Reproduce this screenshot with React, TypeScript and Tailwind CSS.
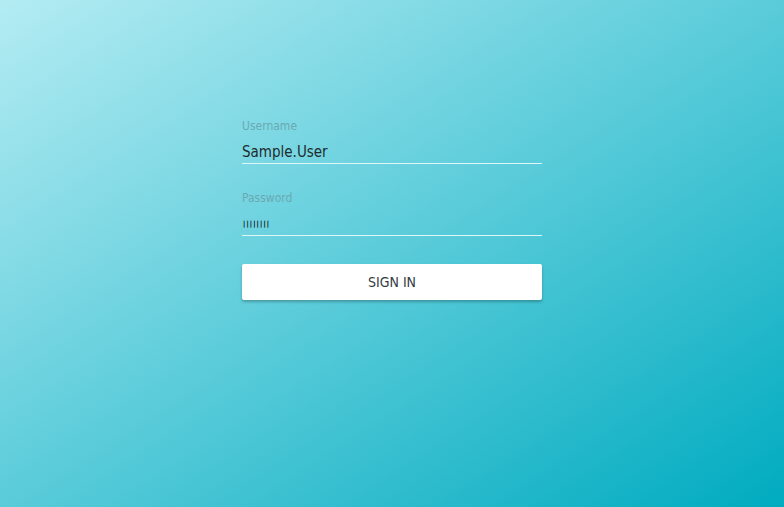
export default function App() {
  return (
    <div
      className="w-[784px] h-[507px] bg-[linear-gradient(to_bottom_right,#b4ecf3,#00abc0)] flex justify-center"
      style={{ fontFamily: "'DejaVu Sans Condensed', 'DejaVu Sans', sans-serif", fontStretch: "condensed" }}
    >
      <div className="w-[300px] pt-[118px]">
        <div className="text-[12px] leading-[16px] text-[#6aa9b3]">Username</div>
        <div className="mt-[6px] h-[24px] text-[15px] leading-[24px] text-[#1f2b2d] border-b border-[#dff6f8]">
          Sample.User
        </div>
        <div className="mt-[26px] text-[12px] leading-[16px] text-[#6aa9b3]">Password</div>
        <div className="mt-[6px] h-[24px] border-b border-[#dff6f8] flex items-center pl-[1px]">
          <span className="text-[7px] leading-[8px] text-black tracking-[1.1px] font-bold">||||||||</span>
        </div>
        <button className="mt-[28px] w-[300px] h-[36px] bg-white rounded-[2px] shadow-[0_2px_3px_rgba(0,0,0,0.25)] text-[14px] text-[#333b44] uppercase">
          Sign In
        </button>
      </div>
    </div>
  );
}
